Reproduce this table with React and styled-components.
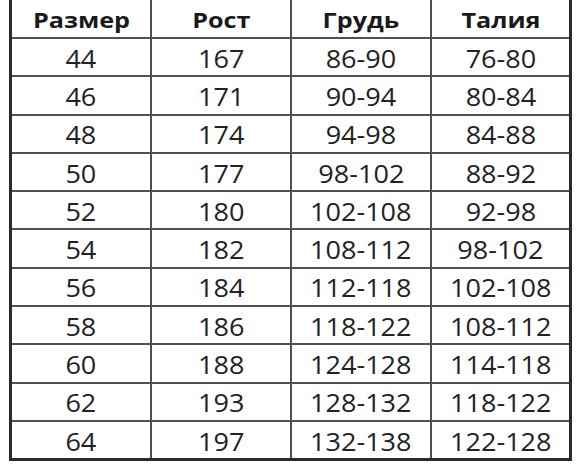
import React from "react";
import styled, { createGlobalStyle } from "styled-components";

const Global = createGlobalStyle`
  html, body { margin: 0; padding: 0; background: #fff; }
  body { font-family: "Open Sans", "DejaVu Sans", sans-serif; color: #222; }
`;

const Page = styled.div`
  width: 582px;
  height: 469px;
  overflow: hidden;
  padding-left: 9px;
  box-sizing: border-box;
`;

const Grid = styled.div`
  display: grid;
  grid-template-columns: 138px 138px 138px 137px;
  grid-template-rows: 37px repeat(11, 36.3px);
  gap: 2px;
  width: 557px;
  background: #505050;
  border: 3px solid #2a2a2a;
  border-top: none;
`;

const Cell = styled.div`
  background: #fff;
  display: flex;
  align-items: center;
  justify-content: center;
  font-size: ${(p) => (p.$head ? "21px" : "26px")};
  font-weight: ${(p) => (p.$head ? 700 : 500)};
  color: ${(p) => (p.$head ? "#1a1a1a" : "#222")};
  line-height: 1;
  white-space: nowrap;
`;

const Text = styled.span`
  display: inline-block;
  transform: scaleX(${(p) => (p.$head ? 1.2 : 1.04)});
  padding-top: ${(p) => (p.$head ? "3px" : "1px")};
`;

const head = ["Размер", "Рост", "Грудь", "Талия"];
const rows = [
  ["44", "167", "86-90", "76-80"],
  ["46", "171", "90-94", "80-84"],
  ["48", "174", "94-98", "84-88"],
  ["50", "177", "98-102", "88-92"],
  ["52", "180", "102-108", "92-98"],
  ["54", "182", "108-112", "98-102"],
  ["56", "184", "112-118", "102-108"],
  ["58", "186", "118-122", "108-112"],
  ["60", "188", "124-128", "114-118"],
  ["62", "193", "128-132", "118-122"],
  ["64", "197", "132-138", "122-128"],
];

export default function App() {
  return (
    <Page>
      <Global />
      <Grid>
        {head.map((h) => (
          <Cell key={h} $head>
            <Text $head>{h}</Text>
          </Cell>
        ))}
        {rows.map((r, i) =>
          r.map((c, j) => (
            <Cell key={i + "-" + j}>
              <Text>{c}</Text>
            </Cell>
          ))
        )}
      </Grid>
    </Page>
  );
}
